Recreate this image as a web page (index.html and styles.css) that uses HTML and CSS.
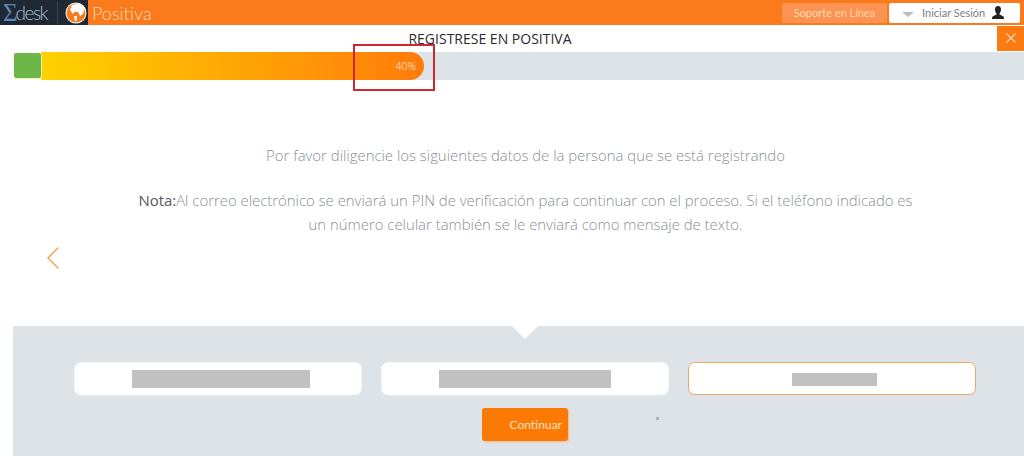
FILE: index.html
```html
<!DOCTYPE html>
<html lang="en">
<head>
    <meta charset="UTF-8">
    <title>Registrese en Positiva</title>
    <link rel="stylesheet" href="styles.css">
</head>
<body>
    <header class="topbar">
        <div class="brand-dark">
            <span class="sigma">Σ</span><span class="desk">desk</span>
            <span class="brand-sep"></span>
            <svg class="globe" width="22" height="22" viewBox="0 0 22 22">
                <circle cx="11" cy="11" r="10.5" fill="#fff"/>
                <circle cx="11" cy="11" r="9.5" fill="#f47b20"/>
                <path d="M7 3 L14 1.5 L20 6 L18 12 L15 14 L13.5 10.5 L10 9.5 L8 12 L5 8 Z" fill="#fff"/>
                <path d="M9 14 L12 14.5 L12 18 L10 19.5 Z" fill="#fff"/>
            </svg>
        </div>
        <span class="brand-name">Positiva</span>
        <div class="topbar-actions">
            <a class="support-btn">Soporte en Línea</a>
            <a class="login-btn">
                <span class="caret"></span>
                <span>Iniciar Sesión</span>
                <svg width="12" height="13" viewBox="0 0 12 13">
                    <path d="M6 0 C8 0 9 1.5 9 3.5 C9 5.5 8 7 7.5 7.5 L7.5 8.5 C9.5 9.5 12 10 12 12 L12 13 L0 13 L0 12 C0 10 2.5 9.5 4.5 8.5 L4.5 7.5 C4 7 3 5.5 3 3.5 C3 1.5 4 0 6 0 Z" fill="#222"/>
                </svg>
            </a>
        </div>
    </header>

    <div class="title-row">
        <h1>REGISTRESE EN POSITIVA</h1>
        <button class="close-btn">
            <svg width="10" height="10" viewBox="0 0 10 10">
                <path d="M0.5 0.5 L9.5 9.5 M9.5 0.5 L0.5 9.5" stroke="#ffd9b0" stroke-width="1.2"/>
            </svg>
        </button>
    </div>

    <div class="progress">
        <span class="progress-check"></span>
        <div class="progress-track">
            <div class="progress-fill">
                <span class="progress-label">40%</span>
            </div>
        </div>
    </div>
    <div class="highlight-box"></div>

    <main class="message">
        <svg class="back-arrow" width="14" height="24" viewBox="0 0 14 24">
            <path d="M12.5 1.5 L2 12 L12.5 22.5" fill="none" stroke="#f2a65a" stroke-width="1.5"/>
        </svg>
        <p class="message-lead">Por favor diligencie los siguientes datos de la persona que se está registrando</p>
        <p class="message-note"><strong>Nota:</strong>Al correo electrónico se enviará un PIN de verificación para continuar con el proceso. Si el teléfono indicado es un número celular también se le enviará como mensaje de texto.</p>
    </main>

    <section class="form-panel">
        <span class="notch"></span>
        <div class="fields">
            <div class="field"><span class="redacted redacted-a"></span></div>
            <div class="field"><span class="redacted redacted-b"></span></div>
            <div class="field field-active"><span class="redacted redacted-c"></span></div>
        </div>
        <div class="actions">
            <button class="continue-btn">Continuar</button>
            <span class="speck"></span>
        </div>
    </section>
</body>
</html>
```

FILE: styles.css
```css
html, body {
    margin: 0;
    height: 456px;
    overflow: hidden;
    background: #fff;
}
body {
    position: relative;
    font-family: "Open Sans", sans-serif;
    color: #8a8f93;
}
.topbar {
    display: flex;
    align-items: center;
    height: 25px;
    background-color: #fb7a1c;
}
.brand-dark {
    display: flex;
    align-items: center;
    width: 88px;
    height: 25px;
    flex-shrink: 0;
    background-color: #1f2833;
    box-sizing: border-box;
    padding-left: 3px;
    overflow: hidden;
}
.sigma {
    font-family: "Liberation Serif", serif;
    font-size: 25px;
    line-height: 25px;
    color: #5f86b8;
}
.desk {
    font-family: "Lato", sans-serif;
    font-size: 19px;
    font-weight: 300;
    line-height: 25px;
    letter-spacing: -1.5px;
    color: #aebfd2;
    margin-left: -2px;
}
.brand-sep {
    width: 1px;
    height: 23px;
    margin-left: 10px;
    background-color: #39414c;
    flex-shrink: 0;
}
.globe {
    margin-left: 7px;
    flex-shrink: 0;
}
.brand-name {
    margin-left: 4px;
    font-family: "Lato", sans-serif;
    font-size: 18px;
    font-weight: 300;
    color: #ffdcb8;
}
.topbar-actions {
    display: flex;
    align-items: center;
    gap: 2px;
    margin-left: auto;
    margin-right: 4px;
}
.support-btn {
    display: block;
    width: 105px;
    height: 20px;
    line-height: 20px;
    text-align: center;
    font-family: "Lato", sans-serif;
    font-size: 11px;
    color: #ffd9b4;
    background-color: #fc9350;
    border-radius: 2px;
}
.login-btn {
    display: flex;
    align-items: center;
    box-sizing: border-box;
    width: 131px;
    height: 20px;
    padding-left: 13px;
    font-family: "Lato", sans-serif;
    font-size: 11px;
    color: #7a7f84;
    background-color: #fff;
    border-radius: 2px;
}
.login-btn svg {
    margin-left: 7px;
}
.caret {
    width: 0;
    height: 0;
    margin: 3px 8px 0 0;
    border-left: 6px solid transparent;
    border-right: 6px solid transparent;
    border-top: 5px solid #b9bdc0;
}
.title-row {
    display: flex;
    justify-content: center;
    height: 27px;
    padding-right: 44px;
    position: relative;
}
.title-row h1 {
    margin: 0;
    font-size: 14px;
    font-weight: 400;
    line-height: 27px;
    color: #2b2b2b;
}
.close-btn {
    position: absolute;
    right: 0;
    top: 1px;
    width: 27px;
    height: 25px;
    padding: 0;
    border: none;
    background-color: #fb7a12;
}
.progress {
    display: flex;
    align-items: flex-start;
    height: 28px;
    padding-left: 14px;
}
.progress-check {
    position: relative;
    z-index: 1;
    width: 27px;
    height: 25px;
    margin-top: 1px;
    flex-shrink: 0;
    background-color: #6cb748;
    border-radius: 2px;
    box-shadow: 1px 1px 0 #f4efa0;
}
.progress-track {
    flex: 1;
    height: 28px;
    background-color: #dde3e6;
}
.progress-fill {
    display: flex;
    align-items: center;
    justify-content: flex-end;
    box-sizing: border-box;
    width: 383px;
    height: 28px;
    padding-right: 8px;
    background: linear-gradient(to right, #ffd200, #ff7b0a);
    border-radius: 0 14px 14px 0;
}
.progress-label {
    font-size: 10.5px;
    font-weight: 300;
    color: #fff3e6;
}
.highlight-box {
    position: absolute;
    left: 353px;
    top: 44px;
    width: 78px;
    height: 43px;
    border: 2px solid #cf2733;
}
.message {
    position: relative;
    height: 246px;
    box-sizing: border-box;
    padding: 63px 0 0 27px;
    font-size: 14.9px;
    font-weight: 300;
    line-height: 24px;
    text-align: center;
}
.message p {
    margin: 0 auto;
}
.message-lead {
    margin-bottom: 21px !important;
}
.message-note {
    width: 780px;
}
.message-note strong {
    font-weight: 400;
    color: #55595c;
}
.back-arrow {
    position: absolute;
    left: 46px;
    top: 166px;
}
.form-panel {
    position: relative;
    height: 130px;
    margin-left: 13px;
    box-sizing: border-box;
    padding: 36px 48px 0 61px;
    background-color: #dde3e6;
}
.notch {
    position: absolute;
    left: 499px;
    top: 0;
    border-left: 13px solid transparent;
    border-right: 13px solid transparent;
    border-top: 13px solid #fff;
}
.fields {
    display: grid;
    grid-template-columns: repeat(3, 1fr);
    gap: 19px;
}
.field {
    display: flex;
    align-items: center;
    justify-content: center;
    height: 33px;
    box-sizing: border-box;
    background-color: #fff;
    border: 1px solid #f6f7f8;
    border-radius: 7px;
    box-shadow: 0 1px 0 #e8eced;
}
.field-active {
    border-color: #eda863;
    box-shadow: none;
}
.redacted {
    display: block;
    background-color: #c1c1c1;
}
.redacted-a {
    width: 178px;
    height: 18px;
    margin-left: 5px;
}
.redacted-b {
    width: 172px;
    height: 18px;
}
.redacted-c {
    width: 85px;
    height: 13px;
    margin: 1px 0 0 4px;
}
.actions {
    position: relative;
    display: flex;
    justify-content: center;
    margin-top: 13px;
}
.continue-btn {
    width: 86px;
    height: 33px;
    padding: 0 6px 0 0;
    border: none;
    border-radius: 3px;
    text-align: right;
    font-family: "Lato", sans-serif;
    font-size: 12px;
    color: #ffe0c2;
    background-color: #fb7a05;
    box-shadow: 1px 1px 2px #f0b98c;
}
.speck {
    position: absolute;
    left: 582px;
    top: 9px;
    width: 3px;
    height: 3px;
    background-color: #b0b4b7;
}
```
